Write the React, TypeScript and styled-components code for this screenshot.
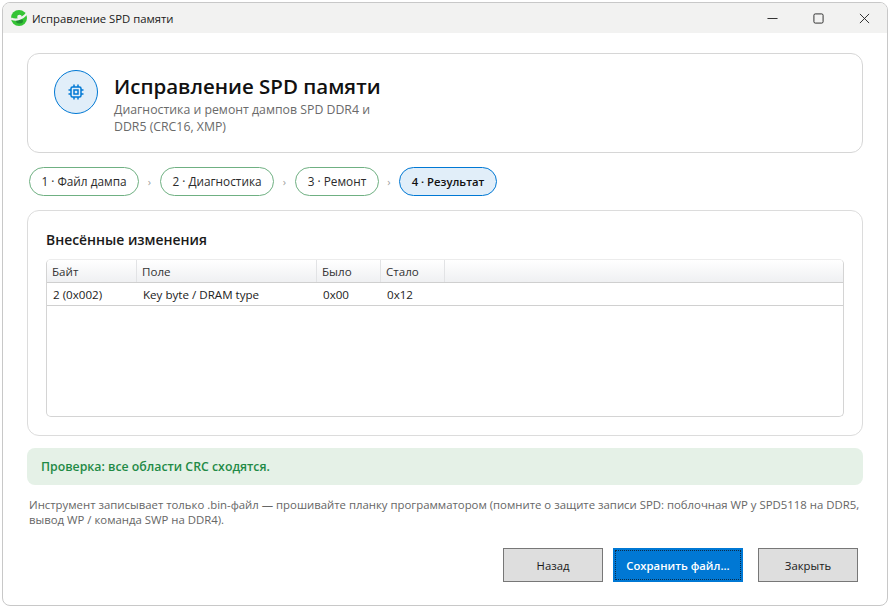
import styled, { createGlobalStyle } from "styled-components";

const steps = [
  { label: "1 · Файл дампа", width: 110, done: true },
  { label: "2 · Диагностика", width: 114, done: true },
  { label: "3 · Ремонт", width: 84, done: true },
  { label: "4 · Результат", width: 98, done: false },
];

const columns = [
  { title: "Байт", width: 90 },
  { title: "Поле", width: 180 },
  { title: "Было", width: 64 },
  { title: "Стало", width: 64 },
];

const cells = ["2 (0x002)", "Key byte / DRAM type", "0x00", "0x12"];

export default function App() {
  return (
    <>
      <GlobalStyle />
      <Window>
        <TitleBar>
          <AppLogo viewBox="0 0 16 16">
            <circle cx="8" cy="8" r="8" fill="#35c435" />
            <ellipse cx="8.5" cy="11" rx="3.5" ry="2.5" fill="#1f8f2e" />
            <path d="M0 8.500C4 10.500 10 10 16 3.500" fill="none" stroke="#f2f2f1" strokeWidth="2.200" />
            <circle cx="8.500" cy="7" r="2.300" fill="#f2f2f1" />
          </AppLogo>
          <WindowTitle>Исправление SPD памяти</WindowTitle>
          <WindowControls>
            <ControlIcon viewBox="0 0 12 12">
              <path d="M0.5 6h11" />
            </ControlIcon>
            <ControlIcon viewBox="0 0 12 12">
              <rect x="1" y="1" width="10" height="10" rx="1.500" />
            </ControlIcon>
            <ControlIcon viewBox="0 0 12 12">
              <path d="M1 1l10 10M11 1L1 11" />
            </ControlIcon>
          </WindowControls>
        </TitleBar>
        <Content>
          <HeaderCard>
            <IconCircle>
              <ChipIcon viewBox="0 0 16 16">
                <rect x="3" y="3" width="10" height="10" rx="1.500" />
                <rect x="6" y="6" width="4" height="4" />
                <path d="M6 0.500V3M10 0.500V3M6 13v2.500M10 13v2.500M0.500 6H3M0.500 10H3M13 6h2.500M13 10h2.500" />
              </ChipIcon>
            </IconCircle>
            <HeaderText>
              <Heading>Исправление SPD памяти</Heading>
              <Subtitle>
                Диагностика и ремонт дампов SPD DDR4 и
                <br />
                DDR5 (CRC16, XMP)
              </Subtitle>
            </HeaderText>
          </HeaderCard>

          <Stepper>
            {steps.map((step, i) => (
              <StepItem key={step.label}>
                {i > 0 && <Chevron $last={i === steps.length - 1}>›</Chevron>}
                <StepPill $done={step.done} $w={step.width}>
                  {step.label}
                </StepPill>
              </StepItem>
            ))}
          </Stepper>

          <ChangesCard>
            <SectionTitle>Внесённые изменения</SectionTitle>
            <TableFrame>
              <HeaderRow>
                {columns.map((col) => (
                  <HeaderCell key={col.title} $w={col.width}>
                    {col.title}
                  </HeaderCell>
                ))}
              </HeaderRow>
              <DataRow>
                {columns.map((col, i) => (
                  <DataCell key={col.title} $w={col.width}>
                    {cells[i]}
                  </DataCell>
                ))}
              </DataRow>
            </TableFrame>
          </ChangesCard>

          <SuccessBanner>Проверка: все области CRC сходятся.</SuccessBanner>

          <Note>
            Инструмент записывает только .bin-файл — прошивайте планку программатором (помните о защите записи SPD: поблочная WP у SPD5118 на DDR5,
            <br />
            вывод WP / команда SWP на DDR4).
          </Note>

          <Footer>
            <Button>Назад</Button>
            <PrimaryButton>
              <span>Сохранить файл...</span>
            </PrimaryButton>
            <CloseButton>Закрыть</CloseButton>
          </Footer>
        </Content>
      </Window>
    </>
  );
}

const GlobalStyle = createGlobalStyle`
  html, body {
    margin: 0;
    padding: 0;
    background: #ffffff;
  }
  body {
    font-family: "Open Sans", "Noto Sans", "Liberation Sans", sans-serif;
    width: 891px;
    height: 608px;
    overflow: hidden;
  }
`;

const Window = styled.div`
  box-sizing: border-box;
  width: 886px;
  height: 604px;
  margin: 2px 0 0 2px;
  border: 1px solid #c8c8c8;
  border-radius: 8px;
  overflow: hidden;
  background: #ffffff;
  display: flex;
  flex-direction: column;
`;

const TitleBar = styled.div`
  height: 30px;
  flex: none;
  background: #f2f2f1;
  display: flex;
  align-items: center;
  padding-left: 8px;
`;

const AppLogo = styled.svg`
  width: 16px;
  height: 16px;
  margin-right: 5px;
`;

const WindowTitle = styled.span`
  font-size: 11.3px;
  color: #1a1a1a;
`;

const WindowControls = styled.div`
  margin-left: auto;
  display: flex;
  align-items: center;
  gap: 35px;
  padding-right: 17px;
`;

const ControlIcon = styled.svg`
  width: 11px;
  height: 11px;
  fill: none;
  stroke: #222222;
  stroke-width: 1;
`;

const Content = styled.div`
  flex: 1;
  display: flex;
  flex-direction: column;
  padding: 20px 24px 0 24px;
`;

const HeaderCard = styled.div`
  box-sizing: border-box;
  height: 100px;
  border: 1px solid #d6d6d6;
  border-radius: 12px;
  display: flex;
  align-items: flex-start;
  padding: 16px 26px;
  gap: 16px;
`;

const IconCircle = styled.div`
  box-sizing: border-box;
  width: 44px;
  height: 44px;
  border-radius: 50%;
  border: 1px solid #0078d4;
  background: #e1eef9;
  display: flex;
  align-items: center;
  justify-content: center;
  flex: none;
`;

const ChipIcon = styled.svg`
  width: 16px;
  height: 16px;
  fill: none;
  stroke: #0078d4;
  stroke-width: 1.5;
`;

const HeaderText = styled.div`
  display: flex;
  flex-direction: column;
`;

const Heading = styled.h1`
  margin: 0;
  font-size: 20.5px;
  line-height: 32px;
  font-weight: 600;
  color: #111111;
`;

const Subtitle = styled.p`
  margin: -1px 0 0;
  font-size: 12.3px;
  line-height: 17px;
  color: #6a6a6a;
`;

const Stepper = styled.div`
  display: flex;
  align-items: center;
  margin: 14px 0 14px 2px;
`;

const StepItem = styled.div`
  display: flex;
  align-items: center;
`;

const Chevron = styled.span<{ $last: boolean }>`
  width: ${({ $last }) => ($last ? 20 : 21)}px;
  text-align: center;
  font-size: 11px;
  color: #a0a0a0;
`;

const StepPill = styled.div<{ $done: boolean; $w: number }>`
  box-sizing: border-box;
  width: ${({ $w }) => $w}px;
  height: 29px;
  padding-bottom: 1px;
  border-radius: 15px;
  border: 1px solid ${({ $done }) => ($done ? "#6fb082" : "#0078d4")};
  background: ${({ $done }) => ($done ? "#ffffff" : "#e1eef9")};
  color: ${({ $done }) => ($done ? "#2b2b2b" : "#111111")};
  font-size: ${({ $done }) => ($done ? "11.8px" : "11.3px")};
  font-weight: ${({ $done }) => ($done ? 400 : 600)};
  white-space: nowrap;
  display: flex;
  align-items: center;
  justify-content: center;
`;

const ChangesCard = styled.div`
  box-sizing: border-box;
  height: 226px;
  border: 1px solid #dcdcdc;
  border-radius: 12px;
  padding: 20px 18px 18px;
  display: flex;
  flex-direction: column;
`;

const SectionTitle = styled.h2`
  margin: 0 0 10px;
  font-size: 13.9px;
  line-height: 18px;
  font-weight: 600;
  color: #1a1a1a;
`;

const TableFrame = styled.div`
  flex: 1;
  border: 1px solid #d4d4d4;
  border-top-color: #ececec;
  border-radius: 5px;
  overflow: hidden;
`;

const HeaderRow = styled.div`
  display: flex;
  height: 23px;
  box-sizing: border-box;
  background: linear-gradient(#ffffff, #eff0f2);
  border-bottom: 1px solid #cfcfcf;
`;

const HeaderCell = styled.div<{ $w: number }>`
  box-sizing: border-box;
  width: ${({ $w }) => $w}px;
  padding-left: 5px;
  border-right: 1px solid #e2e3e5;
  font-size: 11.6px;
  line-height: 24px;
  color: #333333;
`;

const DataRow = styled.div`
  display: flex;
  height: 23px;
  box-sizing: border-box;
  border-bottom: 1px solid #d0d0d0;
`;

const DataCell = styled.div<{ $w: number }>`
  box-sizing: border-box;
  width: ${({ $w }) => $w}px;
  padding-left: 6px;
  font-size: 11.6px;
  line-height: 23px;
  color: #222222;
  white-space: nowrap;
`;

const SuccessBanner = styled.div`
  box-sizing: border-box;
  height: 37px;
  margin-top: 12px;
  border-radius: 8px;
  background: #e5f1e7;
  color: #1f8a46;
  font-size: 12.3px;
  font-weight: 600;
  padding-left: 14px;
  display: flex;
  align-items: center;
`;

const Note = styled.p`
  margin: 12px 0 0 2px;
  font-size: 11.36px;
  line-height: 15px;
  color: #666666;
  white-space: nowrap;
`;

const Footer = styled.div`
  display: flex;
  justify-content: flex-end;
  margin-top: 21px;
  padding-right: 5px;
`;

const Button = styled.button`
  box-sizing: border-box;
  width: 100px;
  height: 34px;
  margin-right: 10px;
  border: 1px solid #777777;
  background: #dedede;
  color: #1a1a1a;
  font-family: inherit;
  font-size: 11.3px;
  padding: 0;
`;

const CloseButton = styled(Button)`
  margin: 0 0 0 15px;
`;

const PrimaryButton = styled.button`
  box-sizing: border-box;
  width: 130px;
  height: 34px;
  padding: 1px;
  border: 1px solid #0078d4;
  background: #0078d4;
  color: #ffffff;
  font-family: inherit;
  font-size: 11.3px;
  font-weight: 600;

  span {
    box-sizing: border-box;
    display: flex;
    align-items: center;
    justify-content: center;
    width: 100%;
    height: 100%;
    border: 1px dotted #0b2d4a;
  }
`;
